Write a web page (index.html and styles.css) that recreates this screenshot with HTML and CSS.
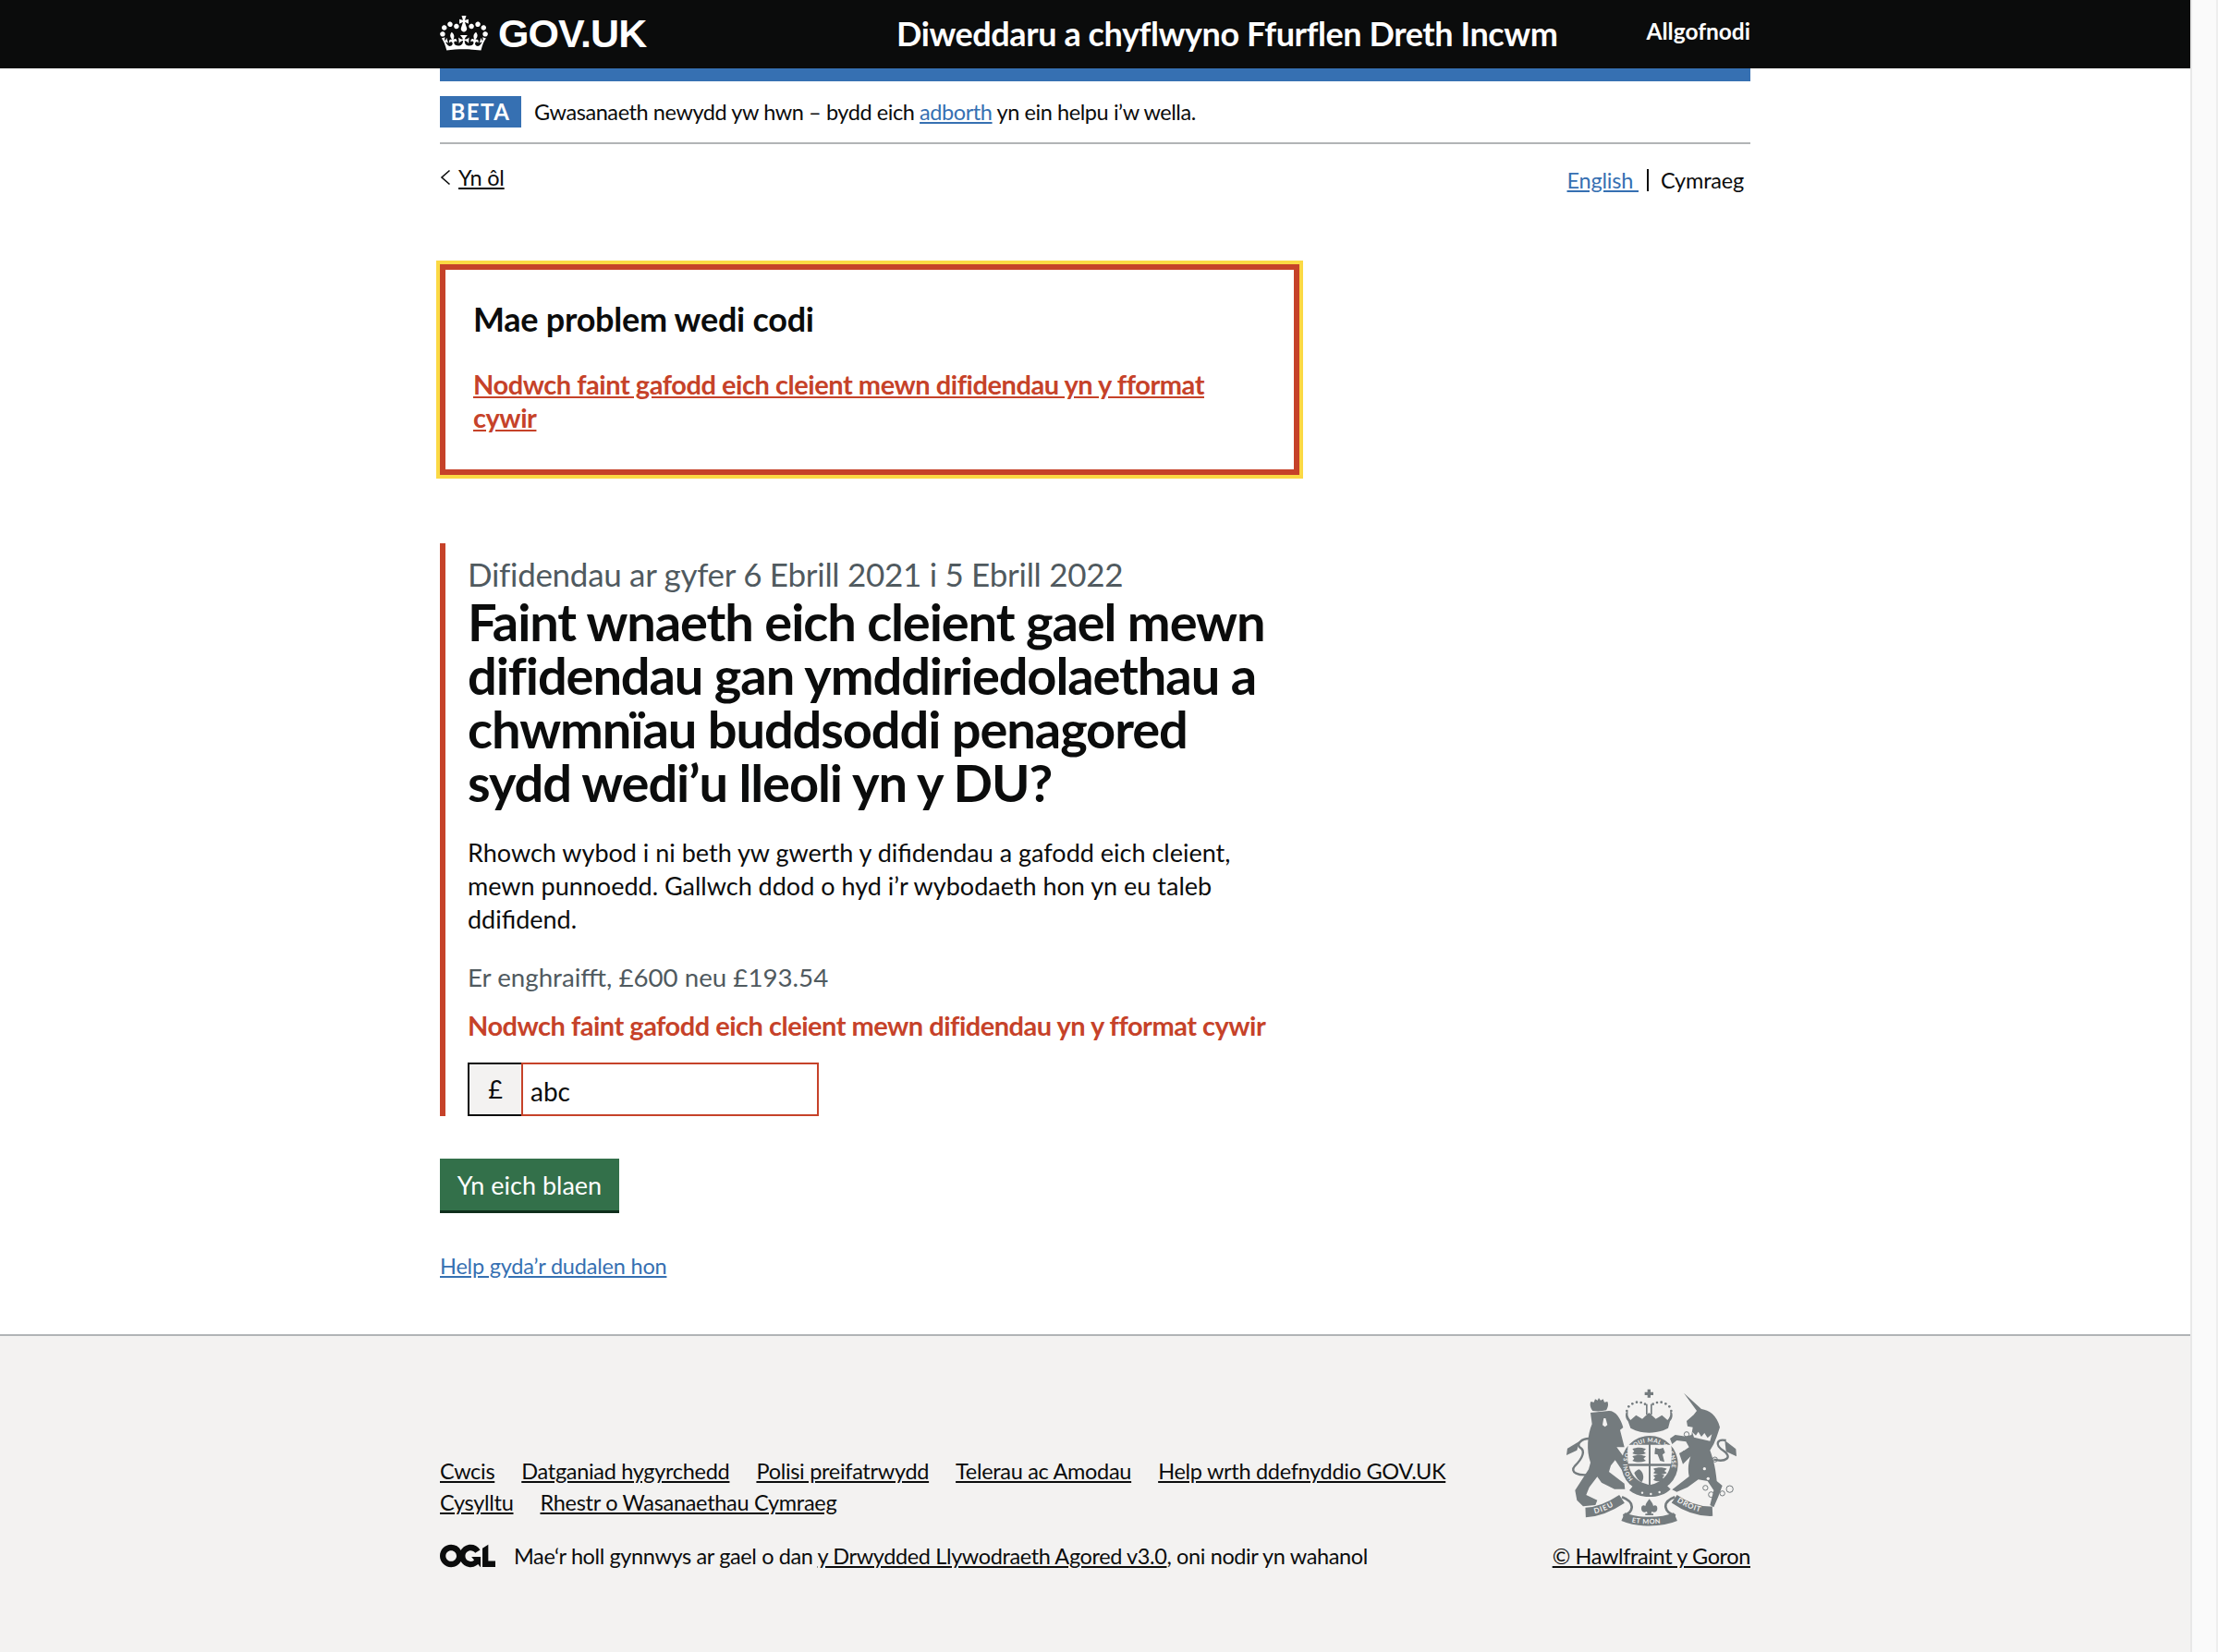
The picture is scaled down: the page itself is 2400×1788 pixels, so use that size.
FILE: index.html
```html
<!DOCTYPE html>
<html lang="cy">
<head>
<meta charset="utf-8">
<title>Diweddaru a chyflwyno Ffurflen Dreth Incwm</title>
<link rel="stylesheet" href="styles.css">
</head>
<body>
<div class="viewport">
  <div class="page">
    <header class="site-header">
      <div class="wrap header-row">
        <a class="logo" href="#">
          <svg class="crown" viewBox="0 0 132 97" aria-hidden="true"><path fill="currentColor" fill-rule="evenodd" d="M25 30.2c3.5 1.5 7.7-.2 9.1-3.7 1.5-3.6-.2-7.8-3.9-9.2-3.6-1.4-7.6.3-9.1 3.9-1.4 3.5.3 7.5 3.9 9zM9 39.5c3.6 1.5 7.8-.2 9.2-3.7 1.5-3.6-.2-7.8-3.9-9.1-3.6-1.5-7.6.2-9.1 3.8-1.4 3.5.3 7.5 3.8 9zM4.4 57.2c3.5 1.5 7.7-.2 9.1-3.8 1.5-3.6-.2-7.7-3.9-9.1-3.5-1.5-7.6.3-9.1 3.8-1.4 3.5.3 7.6 3.9 9.1zm38.3-21.4c3.5 1.5 7.7-.2 9.1-3.8 1.5-3.6-.2-7.7-3.9-9.1-3.6-1.5-7.6.3-9.1 3.8-1.3 3.6.4 7.7 3.9 9.1zm64.4-5.6c-3.6 1.5-7.8-.2-9.1-3.7-1.5-3.6.2-7.8 3.8-9.2 3.6-1.4 7.7.3 9.2 3.9 1.3 3.5-.4 7.5-3.9 9zm15.9 9.3c-3.6 1.5-7.7-.2-9.1-3.7-1.5-3.6.2-7.8 3.7-9.1 3.6-1.5 7.7.2 9.2 3.8 1.5 3.5-.3 7.5-3.8 9zm4.7 17.7c-3.6 1.5-7.8-.2-9.2-3.8-1.5-3.6.2-7.7 3.9-9.1 3.6-1.5 7.7.3 9.2 3.8 1.3 3.5-.4 7.6-3.9 9.1zM89.3 35.8c-3.6 1.5-7.8-.2-9.2-3.8-1.4-3.6.2-7.7 3.9-9.1 3.6-1.5 7.7.3 9.2 3.8 1.4 3.6-.3 7.7-3.9 9.1zM69.7 17.7l8.9 4.7V9.3l-8.9 2.8c-.2-.3-.5-.6-.9-.9L72.4 0H59.6l3.5 11.2c-.3.3-.6.5-.9.9l-8.8-2.8v13.1l8.8-4.7c.3.3.6.7.9.9l-5 15.4v.1c-.2.8-.4 1.6-.4 2.4 0 4.1 3.1 7.5 7 8.1h.2c.3 0 .7.1 1 .1.4 0 .7 0 1-.1h.2c4-.6 7.1-4.1 7.1-8.1 0-.8-.1-1.7-.4-2.4V34l-5.1-15.4c.4-.2.7-.6 1-.9zM66 92.8c16.9 0 32.8 1.1 47.1 3.2 4-16.9 8.9-26.7 14-33.5l-9.6-3.4c1 4.9 1.1 7.2 0 10.2-1.5-1.4-3-4.3-4.2-8.7L108.6 76c2.8-2 5-3.2 7.5-3.3-4.4 9.4-10 11.9-13.6 11.2-4.3-.8-6.3-4.6-5.6-7.9 1-4.7 5.7-5.9 8-.5 4.3-8.7-3-11.4-7.6-8.8 7.1-7.2 7.9-13.5 2.1-21.1-8 6.1-8.1 12.3-4.5 20.8-4.7-5.4-12.1-2.5-9.5 6.2 3.4-5.2 7.9-2 7.2 3.1-.6 4.3-6.4 7.8-13.5 7.2-10.3-.9-10.9-8-11.2-13.8 2.5-.5 7.1 1.8 11 7.3L80.2 60c-4.1 4.4-8 5.3-12.3 5.4 1.4-4.4 8-11.6 8-11.6H55.5s6.4 7.2 7.9 11.6c-4.2-.1-8-1-12.3-5.4l1.4 16.4c3.9-5.5 8.5-7.7 10.9-7.3-.3 5.8-.9 12.8-11.1 13.8-7.2.6-12.9-2.9-13.5-7.2-.7-5 3.8-8.3 7.1-3.1 2.7-8.7-4.6-11.6-9.4-6.2 3.7-8.5 3.6-14.7-4.6-20.8-5.8 7.6-5 13.9 2.2 21.1-4.7-2.6-11.9.1-7.7 8.8 2.3-5.5 7.1-4.2 8.1.5.7 3.3-1.3 7.1-5.7 7.9-3.5.7-9-1.8-13.5-11.2 2.5.1 4.7 1.3 7.5 3.3l-4.7-15.4c-1.2 4.4-2.7 7.2-4.3 8.7-1.1-3-.9-5.3 0-10.2l-9.5 3.4c5 6.9 9.9 16.7 14 33.5 14.8-2.1 30.8-3.2 47.7-3.2z"/></svg>
          <span class="logo-text">GOV.UK</span>
        </a>
        <a class="service-name" href="#">Diweddaru a chyflwyno Ffurflen Dreth Incwm</a>
        <a class="sign-out" href="#">Allgofnodi</a>
      </div>
    </header>

    <div class="wrap">
      <div class="blue-bar"></div>
      <div class="phase">
        <strong class="tag">BETA</strong>
        <span class="phase-text">Gwasanaeth newydd yw hwn – bydd eich <a class="link" href="#">adborth</a> yn ein helpu i’w wella.</span>
      </div>
      <nav class="sub-nav">
        <a class="back" href="#">
          <svg class="chevron" viewBox="0 0 12 18" aria-hidden="true"><path d="M10.5 1.5 2 9l8.5 7.5" fill="none" stroke="#0b0c0c" stroke-width="1.6"/></svg>
          <span>Yn ôl</span>
        </a>
        <div class="lang">
          <a class="link" href="#">English&nbsp;</a>
          <span class="lang-sep"></span>
          <span class="lang-current">Cymraeg</span>
        </div>
      </nav>

      <main>
        <div class="error-summary">
          <h2 class="error-title">Mae problem wedi codi</h2>
          <a class="error-link" href="#">Nodwch faint gafodd eich cleient mewn difidendau yn y fformat cywir</a>
        </div>

        <div class="form-group">
          <span class="caption">Difidendau ar gyfer 6 Ebrill 2021 i 5 Ebrill 2022</span>
          <h1 class="heading">Faint wnaeth eich cleient gael mewn difidendau gan ymddiriedolaethau a chwmnïau buddsoddi penagored sydd wedi’u lleoli yn y DU?</h1>
          <p class="body-text">Rhowch wybod i ni beth yw gwerth y difidendau a gafodd eich cleient, mewn punnoedd. Gallwch ddod o hyd i’r wybodaeth hon yn eu taleb ddifidend.</p>
          <div class="hint">Er enghraifft, £600 neu £193.54</div>
          <div class="error-message">Nodwch faint gafodd eich cleient mewn difidendau yn y fformat cywir</div>
          <div class="input-row">
            <div class="prefix">£</div>
            <input class="input" type="text" value="abc">
          </div>
        </div>

        <button class="button" type="button">Yn eich blaen</button>
        <a class="link help-link" href="#">Help gyda’r dudalen hon</a>
      </main>
    </div>

    <footer class="footer">
      <div class="wrap footer-row">
        <div class="footer-left">
          <ul class="footer-links">
            <li><a href="#">Cwcis</a></li>
            <li><a href="#">Datganiad hygyrchedd</a></li>
            <li><a href="#">Polisi preifatrwydd</a></li>
            <li><a href="#">Telerau ac Amodau</a></li>
            <li><a href="#">Help wrth ddefnyddio GOV.UK</a></li>
            <li><a href="#">Cysylltu</a></li>
            <li><a href="#">Rhestr o Wasanaethau Cymraeg</a></li>
          </ul>
          <div class="licence">
            <svg class="ogl" viewBox="0 0 483.2 195.7" aria-hidden="true"><path fill="currentColor" d="M421.5 142.8V.1l-50.7 32.3v161.1h112.4v-50.7zm-122.3-9.6A47.12 47.12 0 0 1 221 97.8c0-26 21.1-47.1 47.1-47.1 16.7 0 31.4 8.7 39.7 21.8l42.7-27.2A97.63 97.63 0 0 0 268.1 0c-36.5 0-68.3 20.1-85.1 49.7A98 98 0 0 0 97.8 0C43.9 0 0 43.9 0 97.8s43.9 97.8 97.8 97.8c36.5 0 68.3-20.1 85.1-49.7a97.76 97.76 0 0 0 149.6 25.4l19.4 22.2h3v-87.8h-80l24.3 27.5zM97.8 145c-26 0-47.1-21.1-47.1-47.1s21.1-47.1 47.1-47.1 47.2 21 47.2 47S123.8 145 97.8 145"/></svg>
            <span>Mae‘r holl gynnwys ar gael o dan <a href="#">y Drwydded Llywodraeth Agored v3.0</a>, oni nodir yn wahanol</span>
          </div>
        </div>
        <div class="footer-right">
          <svg class="crest" viewBox="162 100 552 450" aria-hidden="true">
            <defs>
              <path id="garter-arc" d="M381 396A72 72 0 1 1 483 396"/>
              <path id="motto-left" d="M232 508C275 506 312 484 342 464"/>
              <path id="motto-mid" d="M360 530C400 542 462 542 502 530"/>
              <path id="motto-right" d="M514 462C548 486 590 504 632 504"/>
            </defs>
            <g fill="#747b7e">
              <!-- royal crown -->
              <path d="M425 102h10v9h9v10h-9v8h-10v-8h-9v-10h9z"/>
              <rect x="420" y="150" width="5" height="34"/><rect x="435" y="150" width="5" height="34"/>
              <path d="M362 206c-8-8-10-20-6-30l6 0c-2 8-1 16 8 26l18-16 20 12 22-20 22 20 20-12 18 16c9-10 10-18 8-26l6 0c4 10 2 22-6 30l-6 22-16 8c-32 10-60 10-90 0l-16-8z"/>
              <g>
                <circle cx="358" cy="172" r="4"/><circle cx="364" cy="158" r="4"/><circle cx="376" cy="149" r="4"/><circle cx="390" cy="144" r="4"/><circle cx="404" cy="145" r="4"/><circle cx="417" cy="150" r="4"/><circle cx="443" cy="150" r="4"/><circle cx="456" cy="145" r="4"/><circle cx="470" cy="144" r="4"/><circle cx="484" cy="149" r="4"/><circle cx="496" cy="158" r="4"/><circle cx="502" cy="172" r="4"/>
              </g>
              <!-- lion crown -->
              <path d="M247 172c-8-10-10-22-6-30l10 2 4-10 8 4 4-8 6 8 8-4 4 10 10-2c4 8 2 18-4 28-14 4-30 4-44 2z"/>
              <!-- lion -->
              <path d="M240 178L300 172C322 172 338 196 346 226L336 234L350 290L325 290L360 338L366 372L346 370L320 332L306 350L300 370L350 408L352 426L318 426L276 405L262 386L236 420L226 445L262 462L256 478L216 482L196 462L190 430L234 362L240 340C226 300 230 250 245 215Z"/>
              <!-- unicorn -->
              <path d="M543 114L600 166C625 170 650 185 660 225L650 255L640 280L628 300C635 320 645 345 650 400L668 415L655 450L640 485L628 478L640 430L620 400L590 395L555 420L520 435L505 428L560 385C555 360 558 340 565 320L540 345L528 310L545 300L560 290L550 272L520 268L505 280L498 262L515 250L550 255L568 250L572 225L555 222L552 205L575 185L585 172Z"/>
              <path d="M205 270L165 294L162 316L196 300Z"/>
              <path d="M676 268L712 296L714 320L680 304Z"/>
              <!-- garter -->
              <circle cx="432" cy="345" r="92"/>
              <!-- fleur-de-lis -->
              <path d="M431 458c6 9 11 13 13 23 5-4 13-2 13 8 0 12-10 15-18 10l-2 7h7v5h-26v-5h7l-2-7c-8 5-18 2-18-10 0-10 8-12 13-8 2-10 7-14 13-23z"/>
              <!-- garter buckle band -->
              <path d="M378 416c34 24 78 24 110-2l12 12c-30 32-100 34-134 4z"/>
            </g>
            <g fill="none" stroke="#747b7e">
              <path stroke-width="7" d="M245 378C200 385 170 372 190 350C215 325 225 300 205 290C195 280 210 262 235 262"/>
              <path stroke-width="7" d="M640 330C680 340 702 322 672 302C642 282 650 262 680 268"/>
              <path stroke-width="31" d="M224 502C270 500 312 478 342 458"/>
              <path stroke-width="29" d="M346 516C392 536 470 536 516 516"/>
              <path stroke-width="31" d="M512 458C546 482 590 500 636 498"/>
              <path stroke-width="8" d="M342 452C390 470 378 504 346 512M514 452C466 470 482 504 516 512"/>
              <g stroke-width="3">
                <circle cx="552" cy="248" r="8"/><circle cx="546" cy="310" r="8"/><circle cx="644" cy="330" r="8"/><circle cx="613" cy="422" r="8"/><circle cx="632" cy="444" r="9"/><circle cx="668" cy="440" r="8"/><circle cx="692" cy="426" r="11"/>
              </g>
            </g>
            <g fill="#f3f2f1">
              <path d="M362 282H429V344H362C360 320 360 300 362 282ZM435 282H502C504 300 504 320 502 344H435ZM365 351H429V412C396 404 372 384 365 351ZM435 351H499C492 384 468 404 435 412Z"/>
              <circle cx="408" cy="438" r="3.6"/><circle cx="436" cy="442" r="3.6"/><circle cx="464" cy="436" r="3.6"/>
              <circle cx="610" cy="360" r="5"/><circle cx="622" cy="392" r="5"/>
              <path d="M570 240l12 12 8-12 10 16 10-12 10 16 14-12-6 22-52-12z"/>
            </g>
            <g fill="#747b7e">
              <path d="M376 296c14-6 30-6 44 0l-8 7 8 7c-14 6-30 6-44 0l6-7zM376 320c14-6 30-6 44 0l-8 7 8 7c-14 6-30 6-44 0l6-7z"/>
              <path d="M450 292l14 4 12-4 6 16-8 6 6 24-14-4-8-20-10-2z"/>
              <path d="M398 362c14 8 18 30 8 42-8-4-18-14-24-30 4-6 10-10 16-12z"/>
              <path d="M444 360c14-6 30-6 44 0l-8 7 8 7c-14 6-30 6-44 0l6-7zM444 382c12-6 26-6 36 0l-6 7 6 7c-10 6-24 6-36 0l6-7z"/>
            </g>
            <g fill="#f3f2f1" class="crest-text">
              <path d="M283 196l6 0 6 22-8 6-8-6z"/>
              <text font-size="19" font-weight="700" letter-spacing="1.2"><textPath href="#garter-arc" startOffset="1%">HONI SOIT QUI MAL Y PENSE</textPath></text>
              <text font-size="24" font-weight="700" letter-spacing="3"><textPath href="#motto-left" startOffset="18%">DIEU</textPath></text>
              <text font-size="22" font-weight="700" letter-spacing="1.5"><textPath href="#motto-mid" startOffset="10%">ET MON</textPath></text>
              <text font-size="24" font-weight="700" letter-spacing="2"><textPath href="#motto-right" startOffset="6%">DROIT</textPath></text>
            </g>
          </svg>
          <a class="copyright" href="#">© Hawlfraint y Goron</a>
        </div>
      </div>
    </footer>
  </div>
  <div class="scrollbar"></div>
</div>
</body>
</html>
```

FILE: styles.css
```css
* { box-sizing: border-box; }
html, body { margin: 0; padding: 0; }
body {
  font-family: "Lato", "Liberation Sans", sans-serif;
  color: #0b0c0c;
  background: #fff;
  font-size: 27px;
  line-height: 36px;
}
a { color: inherit; }
.viewport { display: flex; height: 1788px; overflow: hidden; }
.page { width: 2370px; flex: none; display: flex; flex-direction: column; }
.scrollbar {
  width: 30px;
  flex: none;
  background: #fafafa;
  border-left: 2px solid #e8e8e8;
  border-right: 2px solid #eeeeee;
}
.wrap { width: 1418px; margin: 0 auto; }

.site-header { background: #0b0c0c; height: 74px; color: #fff; flex: none; }
.header-row { display: flex; align-items: center; height: 74px; }
.header-row a { color: #fff; text-decoration: none; }
.logo { display: flex; align-items: center; gap: 11px; width: 494px; flex: none; margin-top: -3px; }
.crown { width: 52px; height: 38px; flex: none; }
.logo-text { font-family: "Liberation Sans", sans-serif; font-weight: 700; font-size: 43px; letter-spacing: -0.9px; line-height: 50px; }
.service-name { font-weight: 700; font-size: 36px; letter-spacing: -0.42px; line-height: 44px; flex: 1; margin-top: -2px; }
.sign-out { font-weight: 700; font-size: 24.5px; line-height: 30px; margin-top: -6px; }

.blue-bar { height: 14px; background: #3670b2; }
.phase { display: flex; align-items: center; gap: 14px; padding: 16px 0; border-bottom: 2px solid #b1b4b6; font-size: 23.5px; letter-spacing: -0.42px; line-height: 34px; }
.tag { background: #3670b2; color: #fff; height: 34px; width: 88px; text-align: center; font-size: 24px; letter-spacing: 1.5px; }
.link { color: #3670b2; }

.sub-nav { display: flex; justify-content: space-between; align-items: flex-start; font-size: 23.5px; letter-spacing: -0.2px; line-height: 30px; height: 130px; }
.back { display: flex; align-items: center; gap: 8px; margin-top: 21px; text-decoration: none; }
.back span { text-decoration: underline; }
.chevron { width: 12px; height: 18px; }
.lang { display: flex; align-items: center; margin-top: 24px; padding-right: 7px; gap: 9px; }
.lang-sep { width: 2px; height: 24px; background: #0b0c0c; }
.lang-current { margin-left: 4px; }

.error-summary {
  width: 930px;
  height: 228px;
  border: 6px solid #c64229;
  outline: 4px solid #fbd944;
  padding: 33px 30px 0;
}
.error-title { margin: 0; font-size: 36px; letter-spacing: -0.25px; line-height: 40px; font-weight: 700; }
.error-link { display: block; margin-top: 33px; color: #c64229; font-weight: 700; font-size: 29px; letter-spacing: -0.46px; line-height: 36px; }

.form-group { margin-top: 74px; padding: 16px 0 0 24px; border-left: 6px solid #c64229; width: 900px; }
.caption { display: block; color: #505a5f; font-size: 35px; letter-spacing: -0.3px; line-height: 36px; margin: -1px 0 5px; }
.heading { margin: 0; font-size: 56px; letter-spacing: -1.1px; line-height: 58px; font-weight: 700; }
.body-text { margin: 29px 0 0; }
.hint { margin-top: 27px; color: #505a5f; font-size: 27.7px; }
.error-message { margin-top: 16px; color: #c64229; font-weight: 700; font-size: 29px; letter-spacing: -0.5px; white-space: nowrap; }
.input-row { display: flex; margin-top: 22px; height: 58px; }
.prefix { width: 58px; border: 2px solid #0b0c0c; border-right: 0; background: #f3f2f1; text-align: center; line-height: 54px; }
.input { width: 322px; height: 58px; border: 2px solid #c64229; padding: 4px 8px 0; font: inherit; font-size: 28px; color: #0b0c0c; background: #fff; border-radius: 0; outline: 0; }

.button { display: block; margin-top: 46px; width: 194px; height: 59px; border: 0; border-bottom: 3px solid #0f2e1c; background: #33704a; color: #fff; font: inherit; font-size: 27px; padding: 2px 0 0; border-radius: 0; }
.help-link { display: block; width: max-content; margin-top: 42px; font-size: 23.5px; letter-spacing: -0.2px; line-height: 30px; }

.footer { margin-top: 59px; flex: 1; background: #f3f2f1; border-top: 2px solid #b1b4b6; padding-top: 57px; font-size: 23.5px; letter-spacing: -0.38px; line-height: 30px; }
.footer-row { display: flex; justify-content: space-between; align-items: flex-end; }
.footer-left { width: 1120px; }
.footer-links { list-style: none; margin: 0 0 26px; padding: 0; display: flex; flex-wrap: wrap; column-gap: 29px; line-height: 34px; letter-spacing: -0.3px; }
.licence { display: flex; align-items: center; gap: 20px; }
.ogl { width: 60px; height: 26px; flex: none; }
.footer-right { display: flex; flex-direction: column; align-items: center; gap: 16px; }
.crest { width: 184px; height: 150px; display: block; overflow: visible; }
.crest-text { font-family: "Lato", "Liberation Sans", sans-serif; letter-spacing: 0; }
```
